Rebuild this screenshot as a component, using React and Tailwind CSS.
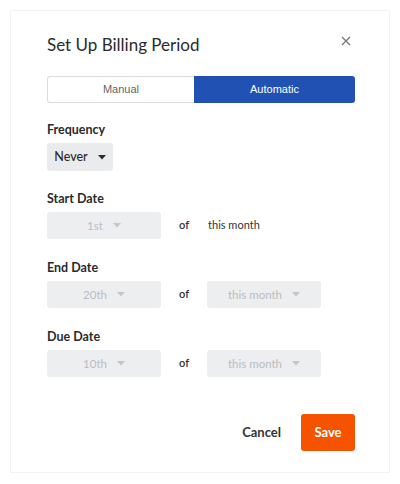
const lato = { fontFamily: "Lato, 'Noto Sans', sans-serif" };

function Caret({ className = "" }) {
  return (
    <svg width="8" height="5" viewBox="0 0 8 5" className={className}>
      <path d="M0 0h8L4 4.5z" fill="currentColor" />
    </svg>
  );
}

function Select({ label, width = "w-[114px]", disabled = true }) {
  return (
    <div
      className={`${width} h-[27px] rounded-[3px] bg-[#eceef0] flex items-center justify-center gap-[10px] text-[11.5px] ${
        disabled ? "text-[#b9bdc1]" : "text-[#333]"
      }`}
    >
      <span>{label}</span>
      <Caret className={disabled ? "text-[#c3c6ca]" : "text-[#333]"} />
    </div>
  );
}

function Label({ children }) {
  return <div className="text-[12.5px] font-bold text-[#2b2b2b] leading-4 mb-[5px]">{children}</div>;
}

export default function App() {
  return (
    <div className="w-[400px] h-[484px] bg-white pt-[10px] pl-[10px]" style={lato}>
      <div className="w-[380px] h-[463px] border border-[#f3f3f3] pt-[23px] pl-[36px] pr-[34px]">
        <div className="flex justify-between items-start">
          <h1 className="text-[17px] leading-[22px] text-[#2b2b2b]">Set Up Billing Period</h1>
          <button className="mt-[2px] mr-[4px] text-[#777]">
            <svg width="10" height="10" viewBox="0 0 10 10">
              <path d="M1 1l8 8M9 1l-8 8" stroke="currentColor" strokeWidth="1.3" />
            </svg>
          </button>
        </div>

        <div
          className="mt-[20px] flex h-[27px] w-[308px] text-[11px]"
          style={{ fontFamily: "'Liberation Sans', Arial, sans-serif" }}
        >
          <div className="flex-1 flex items-center justify-center border border-[#dcdcdc] border-r-0 rounded-l-[3px] text-[#666]">
            Manual
          </div>
          <div className="w-[161px] flex items-center justify-center bg-[#2152b3] rounded-r-[3px] text-white">
            Automatic
          </div>
        </div>

        <div className="mt-[19px]">
          <Label>Frequency</Label>
          <div className="w-[66px] h-[28px] rounded-[3px] bg-[#e9ebed] flex items-center justify-center gap-[10px] text-[12.5px] font-medium text-[#2b2b2b]">
            <span>Never</span>
            <Caret />
          </div>
        </div>

        <div className="mt-[20px]">
          <Label>Start Date</Label>
          <div className="flex items-center">
            <Select label="1st" />
            <span className="ml-[18px] text-[11px] font-semibold text-[#333]">of</span>
            <span className="ml-[19px] text-[11px] text-[#333]">this month</span>
          </div>
        </div>

        <div className="mt-[21px]">
          <Label>End Date</Label>
          <div className="flex items-center">
            <Select label="20th" />
            <span className="ml-[18px] w-[28px] text-[11px] font-semibold text-[#333]">of</span>
            <Select label="this month" />
          </div>
        </div>

        <div className="mt-[21px]">
          <Label>Due Date</Label>
          <div className="flex items-center">
            <Select label="10th" />
            <span className="ml-[18px] w-[28px] text-[11px] font-semibold text-[#333]">of</span>
            <Select label="this month" />
          </div>
        </div>

        <div className="mt-[37px] flex justify-end items-center">
          <button className="text-[13px] font-bold text-[#333] mr-[20px]">Cancel</button>
          <button className="w-[54px] h-[37px] rounded-[3px] bg-[#f65300] text-white text-[13px] font-bold">
            Save
          </button>
        </div>
      </div>
    </div>
  );
}
